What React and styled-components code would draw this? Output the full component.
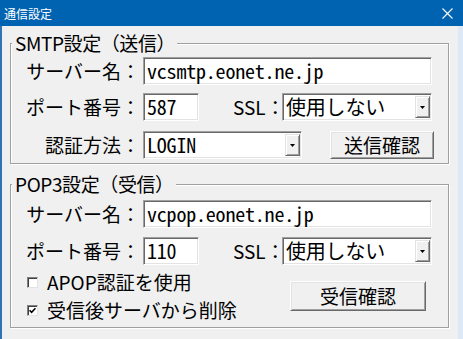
import React from 'react'
import styled, { createGlobalStyle } from 'styled-components'

const GlobalStyle = createGlobalStyle`
  html, body {
    margin: 0;
    padding: 0;
    background: #f0f0f0;
  }
  body {
    width: 463px;
    height: 339px;
    overflow: hidden;
  }
`

const Window = styled.div`
  width: 463px;
  height: 339px;
  display: flex;
  flex-direction: column;
  font-family: "Noto Sans CJK JP", "Noto Sans", sans-serif;
  color: #000;
`

const TitleBar = styled.div`
  height: 26px;
  flex: none;
  background: #0063b1;
  color: #fff;
  display: flex;
  align-items: center;
  justify-content: space-between;
  padding: 0 10px 0 4px;
  font-size: 12px;
`

const Body = styled.div`
  flex: 1;
  background: #f0f0f0;
  border-left: 2px solid #3174b6;
  border-right: 5px solid #dce9f6;
  padding: 6px 9px 0 8px;
  display: flex;
  flex-direction: column;
  gap: 9px;
`

const Group = styled.div`
  position: relative;
  margin-top: 11px;
  border: 1px solid #a0a0a0;
  box-shadow: inset 1px 1px 0 #fff, 1px 1px 0 #fff;
  padding: ${p => p.$pad};
  display: flex;
  flex-direction: column;
`

const Legend = styled.div`
  position: absolute;
  top: -12px;
  left: 1px;
  padding: 0 2px 0 3px;
  background: #f0f0f0;
  font-size: 19px;
  line-height: 22px;
  letter-spacing: -0.4px;
`

const Row = styled.div`
  display: flex;
  align-items: center;
  height: 28px;
  margin-top: ${p => p.$top || 0}px;
`

const Label = styled.div`
  width: ${p => p.$w || 129}px;
  margin-left: ${p => p.$ml || 0}px;
  margin-right: 3px;
  flex: none;
  text-align: ${p => p.$align || 'right'};
  font-size: 19px;
  line-height: 22px;
  white-space: nowrap;
`

const Field = styled.div`
  box-sizing: border-box;
  height: ${p => p.$h || 28}px;
  width: ${p => (p.$w ? `${p.$w}px` : 'auto')};
  flex: ${p => (p.$w ? 'none' : 1)};
  background: #fff;
  border-top: 1px solid #a0a0a0;
  border-left: 1px solid #a0a0a0;
  border-right: 1px solid #fff;
  border-bottom: 1px solid #fff;
  box-shadow: inset 1px 1px 0 #696969, inset -1px -1px 0 #e3e3e3;
  padding: 0 ${p => (p.$combo ? 2 : 2)}px 0 3px;
  display: flex;
  align-items: center;
  font-family: "Noto Sans Mono CJK JP", "Noto Sans CJK JP", "Liberation Mono", monospace;
  font-size: 20px;
  line-height: 24px;
  white-space: nowrap;
  overflow: hidden;
`

const FieldText = styled.span`
  flex: 1;
  letter-spacing: -0.2px;
`

const DropButton = styled.div`
  box-sizing: border-box;
  width: 15px;
  height: calc(100% - 4px);
  margin: 2px -1px 2px 0;
  flex: none;
  background: #f0f0f0;
  border-top: 1px solid #e3e3e3;
  border-left: 1px solid #e3e3e3;
  border-right: 1px solid #696969;
  border-bottom: 1px solid #696969;
  box-shadow: inset 1px 1px 0 #fff, inset -1px -1px 0 #a0a0a0;
  display: flex;
  align-items: center;
  justify-content: center;
`

const Button = styled.div`
  box-sizing: border-box;
  width: ${p => p.$w}px;
  height: ${p => p.$h}px;
  margin-left: ${p => p.$ml || 0}px;
  margin-right: ${p => p.$mr || 0}px;
  flex: none;
  background: #f0f0f0;
  border-top: 1px solid #fff;
  border-left: 1px solid #fff;
  border-right: 1px solid #696969;
  border-bottom: 1px solid #696969;
  box-shadow: inset 1px 1px 0 #e3e3e3, inset -1px -1px 0 #a0a0a0;
  display: flex;
  align-items: center;
  justify-content: center;
  font-size: 19px;
  line-height: 22px;
`

const CheckArea = styled.div`
  display: grid;
  grid-template-columns: 1fr 136px;
  grid-template-rows: 28px 28px;
  margin-top: 3px;
  padding-left: 16px;
  padding-right: 6px;
`

const CheckRow = styled.label`
  display: flex;
  align-items: center;
  gap: 9px;
  font-size: 19px;
  line-height: 22px;
  white-space: nowrap;
`

const Box = styled.span`
  box-sizing: border-box;
  width: 11px;
  height: 11px;
  flex: none;
  background: #fff;
  border-top: 1px solid #808080;
  border-left: 1px solid #808080;
  border-right: 1px solid #e3e3e3;
  border-bottom: 1px solid #e3e3e3;
  box-shadow: inset 1px 1px 0 #404040;
  display: flex;
  align-items: center;
  justify-content: center;
`

const ButtonCell = styled.div`
  grid-column: 2;
  grid-row: 1 / span 2;
  align-self: center;
`

const Arrow = () => (
  <svg width="5" height="3" viewBox="0 0 5 3">
    <path d="M0 0H5L2.5 3Z" fill="#000" />
  </svg>
)

const Close = () => (
  <svg width="11" height="11" viewBox="0 0 11 11">
    <path d="M0.5 0.5L10.5 10.5M10.5 0.5L0.5 10.5" stroke="#fff" strokeWidth="1.1" />
  </svg>
)

const Tick = () => (
  <svg width="7" height="7" viewBox="0 0 7 7">
    <path d="M0.5 3.2L2.6 5.4L6.5 1.2" stroke="#000" strokeWidth="1.6" fill="none" />
  </svg>
)

const Input = ({ value, w }) => (
  <Field $w={w}>
    <FieldText>{value}</FieldText>
  </Field>
)

const Combo = ({ value, w }) => (
  <Field $w={w} $combo>
    <FieldText>{value}</FieldText>
    <DropButton>
      <Arrow />
    </DropButton>
  </Field>
)

const Check = ({ checked, children }) => (
  <CheckRow>
    <Box>{checked && <Tick />}</Box>
    {children}
  </CheckRow>
)

export default function App() {
  return (
    <>
      <GlobalStyle />
      <Window>
        <TitleBar>
          <span>通信設定</span>
          <Close />
        </TitleBar>
        <Body>
          <Group $pad="13px 16px 4px 0">
            <Legend>SMTP設定（送信）</Legend>
            <Row>
              <Label>サーバー名：</Label>
              <Input value="vcsmtp.eonet.ne.jp" />
            </Row>
            <Row $top={8}>
              <Label>ポート番号：</Label>
              <Input value="587" w={56} />
              <Label $w={46} $ml={34} $align="left">SSL：</Label>
              <Combo value="使用しない" />
            </Row>
            <Row $top={10}>
              <Label>認証方法：</Label>
              <Combo value="LOGIN" w={159} />
              <Button $w={104} $h={28} $ml={28} $mr={-3}>送信確認</Button>
            </Row>
          </Group>
          <Group $pad="15px 16px 3px 0">
            <Legend>POP3設定（受信）</Legend>
            <Row>
              <Label>サーバー名：</Label>
              <Input value="vcpop.eonet.ne.jp" />
            </Row>
            <Row $top={9}>
              <Label>ポート番号：</Label>
              <Input value="110" w={56} />
              <Label $w={46} $ml={34} $align="left">SSL：</Label>
              <Combo value="使用しない" />
            </Row>
            <CheckArea>
              <Check>APOP認証を使用</Check>
              <Check checked>受信後サーバから削除</Check>
              <ButtonCell>
                <Button $w={136} $h={30}>受信確認</Button>
              </ButtonCell>
            </CheckArea>
          </Group>
        </Body>
      </Window>
    </>
  )
}
